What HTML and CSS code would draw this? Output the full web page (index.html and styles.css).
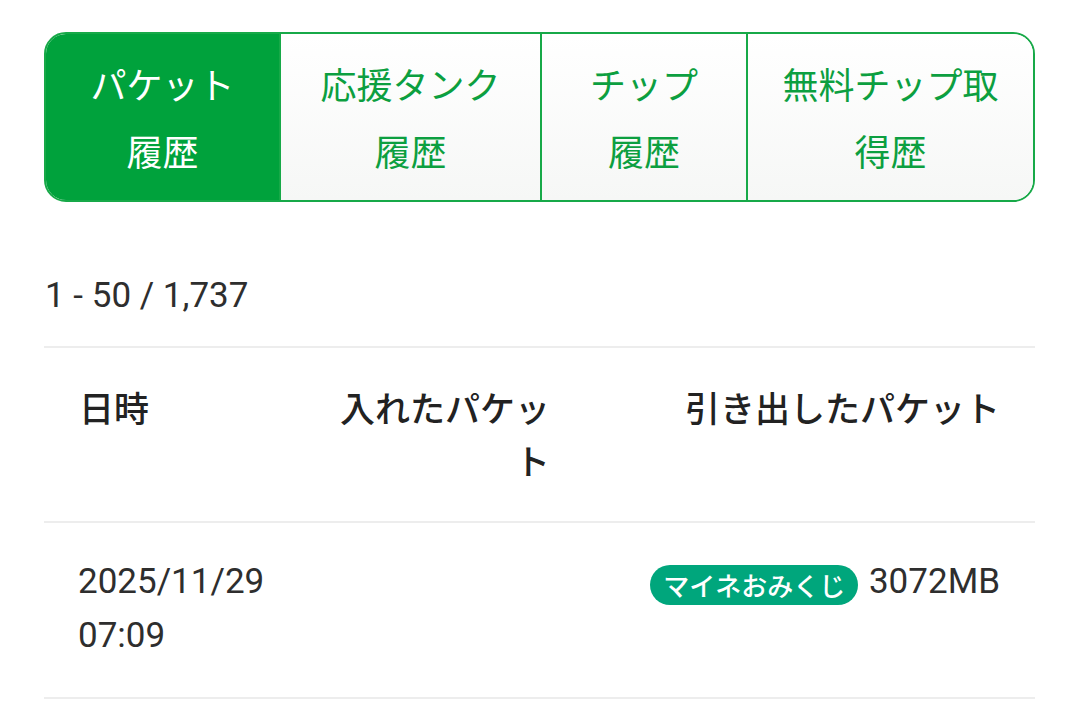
FILE: index.html
```html
<!DOCTYPE html>
<html lang="ja">
<head>
<meta charset="utf-8">
<title>パケット履歴</title>
<link rel="stylesheet" href="styles.css">
</head>
<body>
<div class="page">
  <nav class="tabs">
    <a class="tab active">パケット<br>履歴</a>
    <a class="tab">応援タンク<br>履歴</a>
    <a class="tab">チップ<br>履歴</a>
    <a class="tab">無料チップ取<br>得歴</a>
  </nav>

  <p class="count">1 - 50 / 1,737</p>

  <div class="table">
    <div class="row head">
      <div class="cell c1">日時</div>
      <div class="cell c2">入れたパケット</div>
      <div class="cell c3">引き出したパケット</div>
    </div>
    <div class="row">
      <div class="cell c1 num">2025/11/29<br>07:09</div>
      <div class="cell c2 num"></div>
      <div class="cell c3 num"><span class="badge">マイネおみくじ</span> 3072MB</div>
    </div>
  </div>
</div>
</body>
</html>
```

FILE: styles.css
```css
html, body {
  margin: 0;
  padding: 0;
  background: #ffffff;
}

body {
  font-family: Roboto, "Noto Sans CJK JP", sans-serif;
  color: #2a2a2a;
}

.page {
  padding: 32px 45px 0 44px;
}

.tabs {
  display: grid;
  grid-template-columns: 233fr 261fr 206fr 287fr;
  border: 2px solid #17a948;
  border-radius: 22px;
  overflow: hidden;
}

.tab {
  display: block;
  padding: 16px 0;
  text-align: center;
  font-family: "Noto Sans CJK JP", sans-serif;
  font-size: 36px;
  line-height: 67px;
  color: #0c9f40;
  background: linear-gradient(#ffffff, #f6f7f6);
  border-left: 2px solid #17a948;
  text-decoration: none;
}

.tab.active {
  background: #00a23c;
  color: #ffffff;
  border-left: none;
}

.count {
  margin: 67px 0 0 1px;
  font-size: 35px;
  line-height: 54px;
  color: #2e2e2e;
}

.table {
  margin-top: 23px;
  border-top: 2px solid #ededed;
}

.row {
  display: grid;
  grid-template-columns: 240px 301px 1fr;
  padding: 32px 0 34px;
  border-bottom: 2px solid #ededed;
}

.row.head {
  padding: 32px 0 35px;
}

.cell {
  font-size: 35px;
  line-height: 54px;
}

.head .cell {
  font-family: "Noto Sans CJK JP", sans-serif;
  font-weight: 500;
  line-height: 53px;
  color: #222222;
}

.c1 {
  padding-left: 35px;
}

.c2 {
  padding: 0 35px 0 40px;
  text-align: right;
}

.c3 {
  padding-right: 35px;
  text-align: right;
}

.num {
  color: #2e2e2e;
}

.c1.num {
  padding-left: 34px;
}

.badge {
  display: inline-block;
  vertical-align: -3px;
  height: 40px;
  padding: 0 13px;
  border-radius: 20px;
  background: #00a67c;
  color: #ffffff;
  font-family: "Noto Sans CJK JP", sans-serif;
  font-weight: 500;
  font-size: 26px;
  line-height: 40px;
  margin-right: 2px;
}
```
